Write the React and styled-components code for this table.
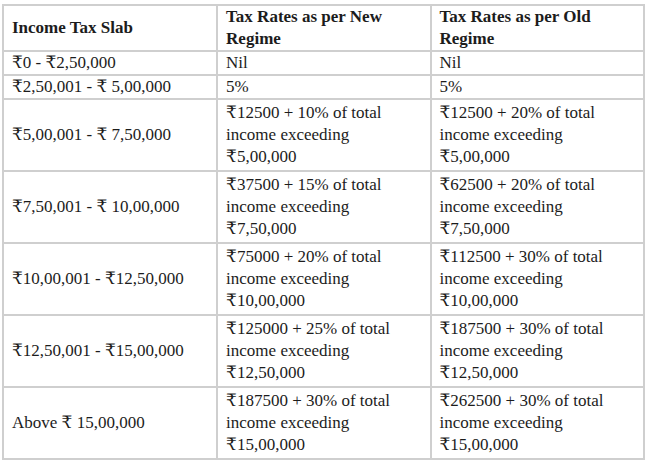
import React from 'react'
import styled, { createGlobalStyle } from 'styled-components'

const GlobalStyle = createGlobalStyle`
    body{
        margin:0;
        background:#fff;
    }
`

const rows = [
    { slab: '₹0 - ₹2,50,000', newR: ['Nil'], oldR: ['Nil'] },
    { slab: '₹2,50,001 - ₹ 5,00,000', newR: ['5%'], oldR: ['5%'] },
    { slab: '₹5,00,001 - ₹ 7,50,000', newR: ['₹12500 + 10% of total', 'income exceeding', '₹5,00,000'], oldR: ['₹12500 + 20% of total', 'income exceeding', '₹5,00,000'] },
    { slab: '₹7,50,001 - ₹ 10,00,000', newR: ['₹37500 + 15% of total', 'income exceeding', '₹7,50,000'], oldR: ['₹62500 + 20% of total', 'income exceeding', '₹7,50,000'] },
    { slab: '₹10,00,001 - ₹12,50,000', newR: ['₹75000 + 20% of total', 'income exceeding', '₹10,00,000'], oldR: ['₹112500 + 30% of total', 'income exceeding', '₹10,00,000'] },
    { slab: '₹12,50,001 - ₹15,00,000', newR: ['₹125000 + 25% of total', 'income exceeding', '₹12,50,000'], oldR: ['₹187500 + 30% of total', 'income exceeding', '₹12,50,000'] },
    { slab: 'Above ₹ 15,00,000', newR: ['₹187500 + 30% of total', 'income exceeding', '₹15,00,000'], oldR: ['₹262500 + 30% of total', 'income exceeding', '₹15,00,000'] },
]

export default function App() {
    return (
        <Page>
            <GlobalStyle />
            <Table>
                <colgroup>
                    <col style={{ width: '33.4%' }} />
                    <col style={{ width: '33.3%' }} />
                    <col style={{ width: '33.3%' }} />
                </colgroup>
                <thead>
                    <tr>
                        <Th>Income Tax Slab</Th>
                        <Th>Tax Rates as per New<br />Regime</Th>
                        <Th>Tax Rates as per Old<br />Regime</Th>
                    </tr>
                </thead>
                <tbody>
                    {rows.map((r) => (
                        <Row key={r.slab} $short={r.newR.length === 1}>
                            <Td>{r.slab}</Td>
                            <Td>{r.newR.map((l, i) => <Line key={i}>{l}</Line>)}</Td>
                            <Td>{r.oldR.map((l, i) => <Line key={i}>{l}</Line>)}</Td>
                        </Row>
                    ))}
                </tbody>
            </Table>
        </Page>
    )
}

const Page = styled.div`
    padding:4px 4px 0 2px;
    width:650px;
    box-sizing:border-box;
`

const Table = styled.table`
    width:643px;
    border-collapse:collapse;
    table-layout:fixed;
    font-family:"Liberation Serif","DejaVu Serif",serif;
    font-size:17px;
    color:#1c1c1c;
    border:2px solid #cfcfcf;
`

const Th = styled.th`
    text-align:left;
    font-weight:bold;
    padding:0 8px;
    height:38px;
    line-height:22px;
    border:2px solid #cfcfcf;
    vertical-align:middle;
`

const Row = styled.tr`
    height:${(p) => (p.$short ? '24px' : '72px')};
`

const Td = styled.td`
    padding:0 8px;
    line-height:22px;
    border:2px solid #cfcfcf;
    vertical-align:middle;
`

const Line = styled.div``
